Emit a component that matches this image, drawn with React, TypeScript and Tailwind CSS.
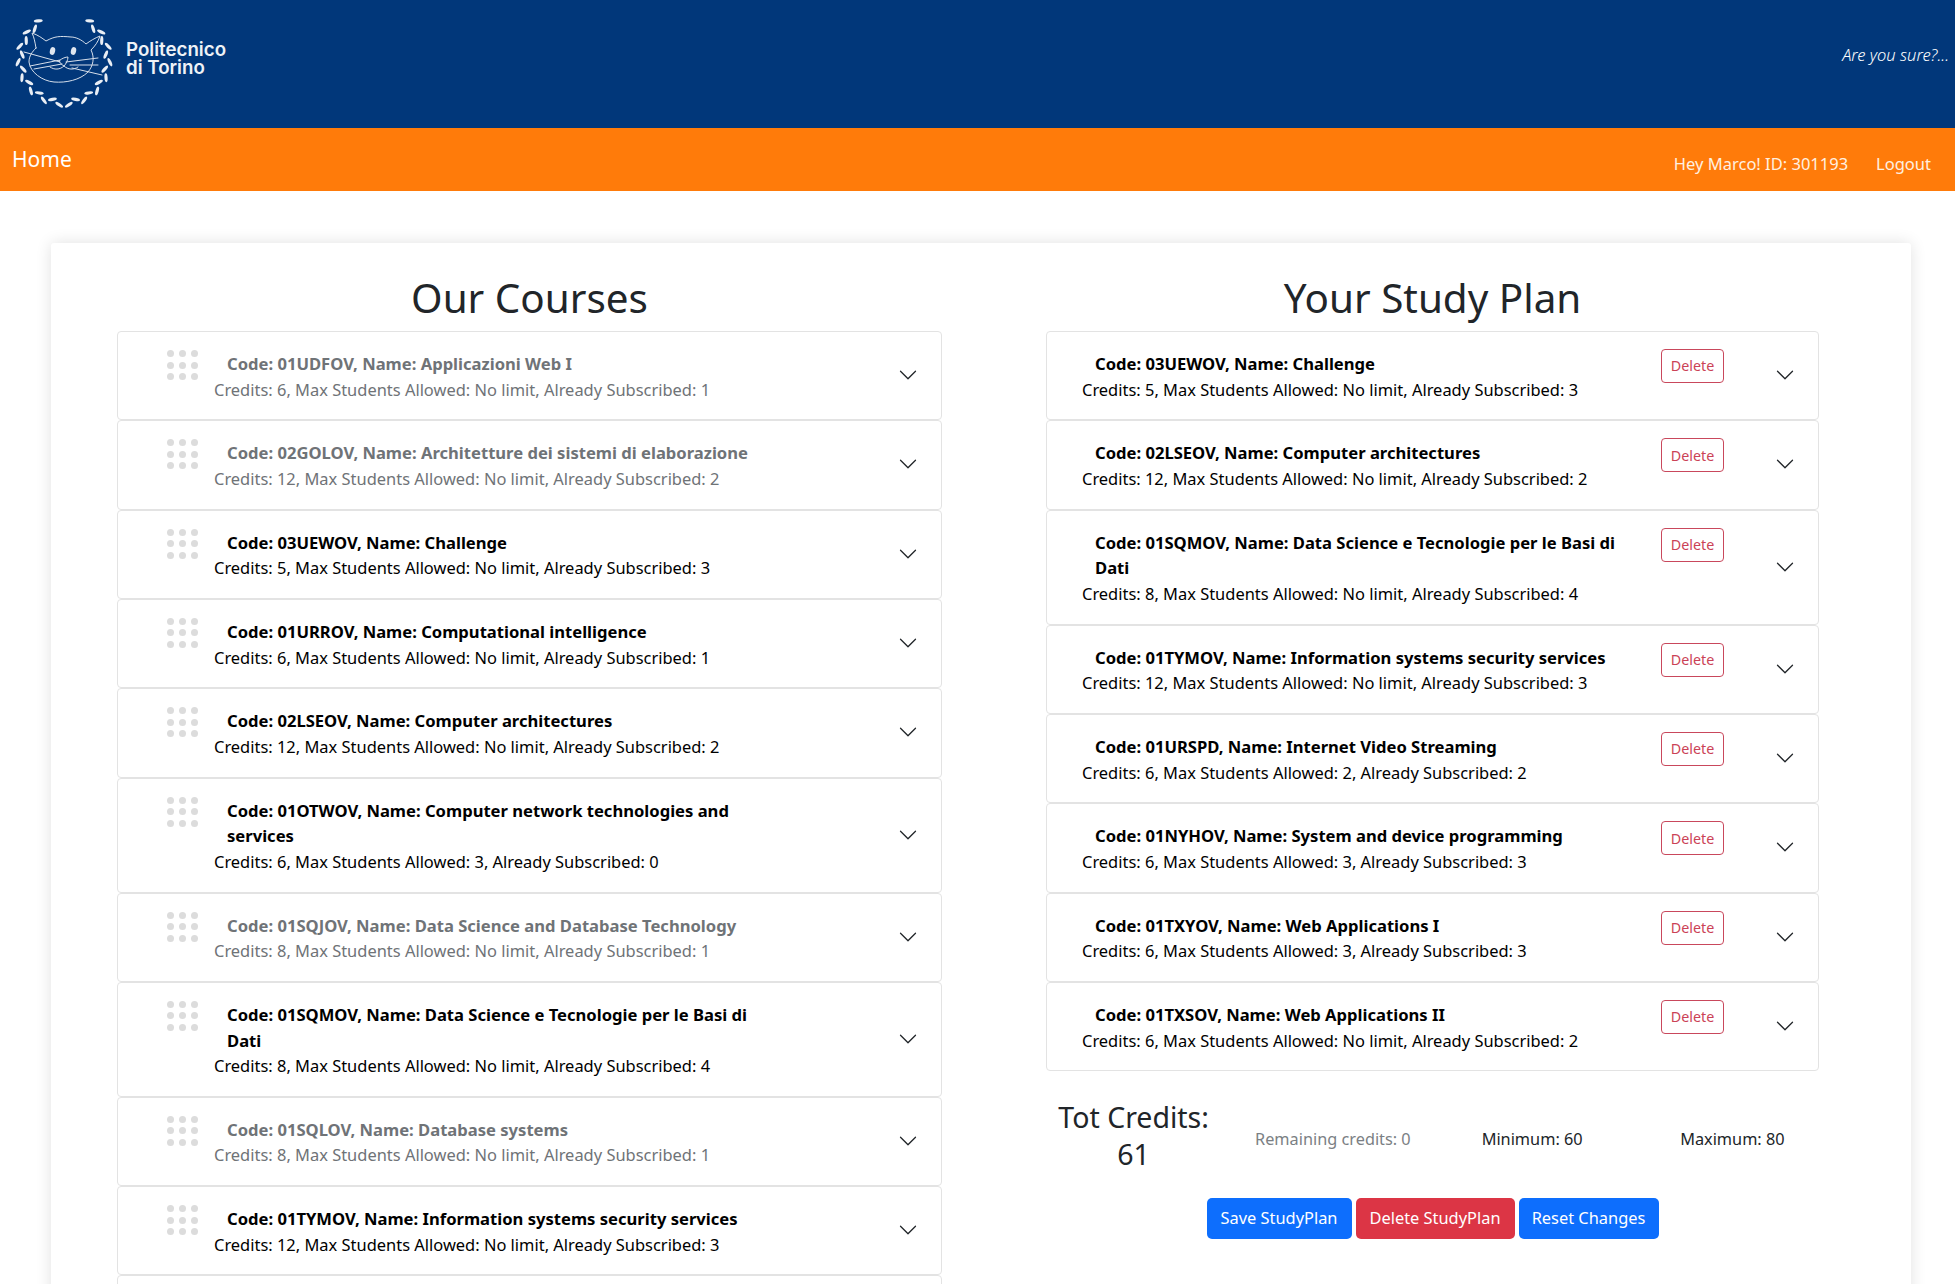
import React from "react";

type Course = { code: string; name: string; credits: number; max: string; subs: number; off?: boolean };

const left: Course[] = [
  { code: "01UDFOV", name: "Applicazioni Web I", credits: 6, max: "No limit", subs: 1, off: true },
  { code: "02GOLOV", name: "Architetture dei sistemi di elaborazione", credits: 12, max: "No limit", subs: 2, off: true },
  { code: "03UEWOV", name: "Challenge", credits: 5, max: "No limit", subs: 3 },
  { code: "01URROV", name: "Computational intelligence", credits: 6, max: "No limit", subs: 1 },
  { code: "02LSEOV", name: "Computer architectures", credits: 12, max: "No limit", subs: 2 },
  { code: "01OTWOV", name: "Computer network technologies and services", credits: 6, max: "3", subs: 0 },
  { code: "01SQJOV", name: "Data Science and Database Technology", credits: 8, max: "No limit", subs: 1, off: true },
  { code: "01SQMOV", name: "Data Science e Tecnologie per le Basi di Dati", credits: 8, max: "No limit", subs: 4 },
  { code: "01SQLOV", name: "Database systems", credits: 8, max: "No limit", subs: 1, off: true },
  { code: "01TYMOV", name: "Information systems security services", credits: 12, max: "No limit", subs: 3 },
  { code: "01URSPD", name: "Internet Video Streaming", credits: 6, max: "2", subs: 2 },
];

const plan: Course[] = [
  { code: "03UEWOV", name: "Challenge", credits: 5, max: "No limit", subs: 3 },
  { code: "02LSEOV", name: "Computer architectures", credits: 12, max: "No limit", subs: 2 },
  { code: "01SQMOV", name: "Data Science e Tecnologie per le Basi di Dati", credits: 8, max: "No limit", subs: 4 },
  { code: "01TYMOV", name: "Information systems security services", credits: 12, max: "No limit", subs: 3 },
  { code: "01URSPD", name: "Internet Video Streaming", credits: 6, max: "2", subs: 2 },
  { code: "01NYHOV", name: "System and device programming", credits: 6, max: "3", subs: 3 },
  { code: "01TXYOV", name: "Web Applications I", credits: 6, max: "3", subs: 3 },
  { code: "01TXSOV", name: "Web Applications II", credits: 6, max: "No limit", subs: 2 },
];

function Chevron() {
  return (
    <svg width="20" height="20" viewBox="0 0 16 16" fill="#212529" className="shrink-0 -mt-[1px]">
      <path fillRule="evenodd" d="M1.646 4.646a.5.5 0 0 1 .708 0L8 10.293l5.646-5.647a.5.5 0 0 1 .708.708l-6 6a.5.5 0 0 1-.708 0l-6-6a.5.5 0 0 1 0-.708z" />
    </svg>
  );
}

function Dots() {
  return (
    <div className="grid grid-cols-3 gap-x-[5px] gap-y-[4.5px] w-[31px] shrink-0 self-start mt-[18px] mr-[1px]">
      {Array.from({ length: 9 }).map((_, i) => (
        <span key={i} className="w-[7px] h-[7px] rounded-full bg-[#dcdcdc]" />
      ))}
    </div>
  );
}

function Wreath() {
  const leaves: React.ReactNode[] = [];
  const cx = 64, cy = 59, r = 44;
  const side = (dir: number) => {
    for (let i = 0; i < 15; i++) {
      const deg = 34 + i * 10;
      const a = (deg * Math.PI) / 180;
      const rr = i % 2 ? r - 2 : r + 2;
      const x = cx + dir * rr * Math.sin(a);
      const y = cy - rr * Math.cos(a);
      const rot = dir * (deg + (i % 2 ? 28 : -28));
      leaves.push(<ellipse key={dir + "-" + i} cx={x} cy={y} rx="4.5" ry="1.6" fill="#e9eef5" transform={`rotate(${rot} ${x} ${y})`} />);
    }
  };
  side(-1);
  side(1);
  return (
    <svg width="128" height="128" viewBox="0 0 128 128" className="shrink-0">
      {leaves}
      <g fill="none" stroke="#d5deea" strokeWidth="1" strokeLinecap="round" strokeLinejoin="round">
        <path d="M36 48C35 42 34 37 32 33C38 35 42 38 46 41C55 36 60 36 71 37C76 37 82 40 86 44C90 41 95 38 100 36C98 42 95 46 91 50C95 58 93 66 88 72C80 80 66 83 54 82C42 81 30 72 29 62C29 56 32 52 36 48Z" />
        <path d="M24 52L60 62M30 66L60 60M34 69L62 64M66 62L98 58M70 65L98 65M72 68L102 75" />
        <path d="M59 61C62 58 66 57 68 57C68 60 66 64 64 66C62 65 60 63 59 61ZM64 66C60 70 54 70 50 67M64 66C68 70 74 70 78 67" />
      </g>
      <ellipse cx="52.5" cy="51" rx="2.6" ry="4" fill="#dfe6ef" transform="rotate(15 52.5 51)" />
      <ellipse cx="73.5" cy="51" rx="2.6" ry="4" fill="#dfe6ef" transform="rotate(15 73.5 51)" />
    </svg>
  );
}

function Text({ c }: { c: Course }) {
  return (
    <div className="leading-[25.65px] pt-[1px] -mb-[1px]">
      <div className="pl-[13px] font-bold text-[16.6px]">Code: {c.code}, Name: {c.name}</div>
      <div className="text-[16.45px]">Credits: {c.credits}, Max Students Allowed: {c.max}, Already Subscribed: {c.subs}</div>
    </div>
  );
}

function LeftRow({ c }: { c: Course }) {
  return (
    <div className={`flex items-center border border-[#e3e3e3] rounded-[4px] pl-[49px] pr-[23px] py-[18px] ${c.off ? "text-[#6f7377]" : "text-black"}`}>
      <div className="flex flex-1 self-start -mt-[18px]">
        <Dots />
        <div className="w-[560px] ml-[15px] mt-[18px]"><Text c={c} /></div>
      </div>
      <Chevron />
    </div>
  );
}

function PlanRow({ c }: { c: Course }) {
  return (
    <div className="flex items-center border border-[#e3e3e3] rounded-[4px] pl-[35px] pr-[23px] py-[18px] text-black">
      <div className="w-[560px] shrink-0"><Text c={c} /></div>
      <div className="flex flex-1 items-center justify-between self-stretch relative">
        <button className="self-start -mt-[1px] ml-[19px] w-[63px] h-[34px] border border-[#c9485c] rounded-[4px] text-[#cb4256] text-[14.3px]">Delete</button>
        <Chevron />
      </div>
    </div>
  );
}

export default function App() {
  return (
    <div className="h-[1284px] overflow-hidden bg-white text-[#212529] font-['Noto_Sans','Open_Sans',sans-serif]">
      <header className="h-[128px] bg-[#01377a] flex justify-between">
        <div className="flex items-start">
          <Wreath />
          <div className="mt-[41px] -ml-[2px] font-['Inter',sans-serif] font-semibold text-[18.7px] leading-[18px] text-[#eef2f7]">
            Politecnico<br />di Torino
          </div>
        </div>
        <div className="pt-[43px] pr-[6px] italic font-light text-[16.5px] text-white">Are you sure?...</div>
      </header>
      <nav className="h-[63px] bg-[#ff7b0a] flex items-center justify-between pl-[12px] pr-[24px] text-white">
        <span className="text-[21px]">Home</span>
        <div className="flex gap-[28px] text-[16.5px] pt-[9px] text-[#fff0e0]">
          <span>Hey Marco! ID: 301193</span>
          <span>Logout</span>
        </div>
      </nav>
      <main className="ml-[51px] mr-[44px] mt-[52px] pt-[31px] px-[66px] pb-10 bg-white shadow-[0_0_16px_rgba(0,0,0,0.12)] rounded-[3px] grid grid-cols-[825px_773px] gap-x-[104px]">
        <section>
          <h2 className="text-center text-[40.4px] leading-[48px] mb-[9px]">Our Courses</h2>
          <div className="flex flex-col">
            {left.map((c) => <LeftRow key={c.code} c={c} />)}
          </div>
        </section>
        <section>
          <h2 className="text-center text-[40.4px] leading-[48px] mb-[9px]">Your Study Plan</h2>
          <div className="flex flex-col">
            {plan.map((c) => <PlanRow key={c.code} c={c} />)}
          </div>
          <div className="-mx-3 grid grid-cols-4 items-center text-center mt-[28px]">
            <div className="text-[28.5px] leading-[37px]">Tot Credits:<br />61</div>
            <div className="text-[16.3px] text-[#7b7f84] pt-[6px]">Remaining credits: 0</div>
            <div className="text-[16.3px] pt-[6px]">Minimum: 60</div>
            <div className="text-[16.3px] pt-[6px] pl-[2px]">Maximum: 80</div>
          </div>
          <div className="flex justify-center gap-[4px] mt-[25px] text-white text-[16.4px]">
            <button className="w-[145px] h-[41px] bg-[#0d6efd] rounded-[5px]">Save StudyPlan</button>
            <button className="w-[159px] h-[41px] bg-[#dc3545] rounded-[5px]">Delete StudyPlan</button>
            <button className="w-[140px] h-[41px] bg-[#0d6efd] rounded-[5px]">Reset Changes</button>
          </div>
        </section>
      </main>
    </div>
  );
}
